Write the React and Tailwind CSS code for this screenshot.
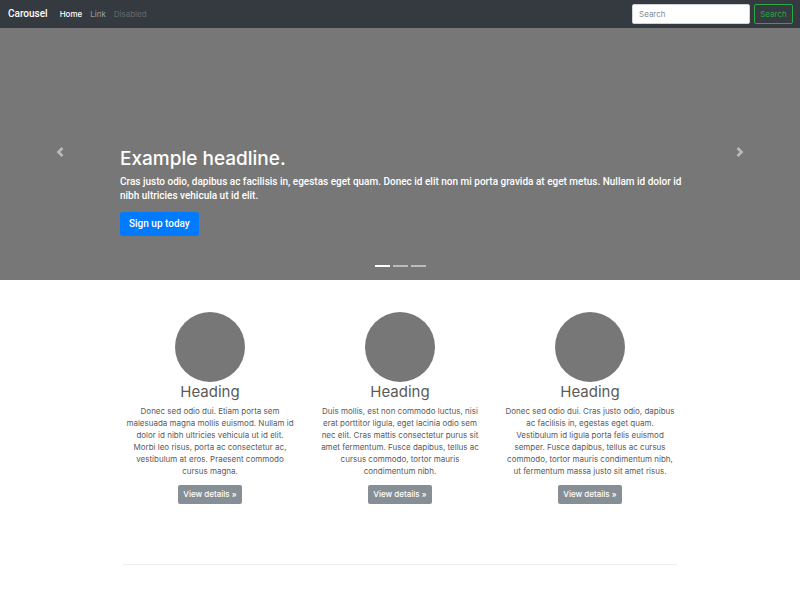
const columns = [
  {
    id: 'first',
    lines: [
      'Donec sed odio dui. Etiam porta sem',
      'malesuada magna mollis euismod. Nullam id',
      'dolor id nibh ultricies vehicula ut id elit.',
      'Morbi leo risus, porta ac consectetur ac,',
      'vestibulum at eros. Praesent commodo',
      'cursus magna.',
    ],
  },
  {
    id: 'second',
    lines: [
      'Duis mollis, est non commodo luctus, nisi',
      'erat porttitor ligula, eget lacinia odio sem',
      'nec elit. Cras mattis consectetur purus sit',
      'amet fermentum. Fusce dapibus, tellus ac',
      'cursus commodo, tortor mauris',
      'condimentum nibh.',
    ],
  },
  {
    id: 'third',
    lines: [
      'Donec sed odio dui. Cras justo odio, dapibus',
      'ac facilisis in, egestas eget quam.',
      'Vestibulum id ligula porta felis euismod',
      'semper. Fusce dapibus, tellus ac cursus',
      'commodo, tortor mauris condimentum nibh,',
      'ut fermentum massa justo sit amet risus.',
    ],
  },
];

function Navbar() {
  return (
    <nav className="flex h-7 items-center bg-[#343a40] px-2 text-[8px] leading-3">
      <a href="#" className="mr-3 font-[Roboto,sans-serif] text-[10px] font-medium text-white">Carousel</a>
      <div className="flex flex-1 gap-2">
        <a href="#" className="font-medium text-white">Home</a>
        <a href="#" className="text-white/50">Link</a>
        <a href="#" aria-disabled="true" className="text-white/25">Disabled</a>
      </div>
      <form className="-mr-px flex gap-1" onSubmit={(e) => e.preventDefault()}>
        <input
          type="text"
          aria-label="Search"
          placeholder="Search"
          className="h-5 w-[118px] rounded-xs border border-[#ced4da] bg-white px-[6px] text-[#495057] placeholder:text-[#868e96]"
        />
        <button type="submit" className="h-5 w-[39px] rounded-xs border border-[#28a745] text-[#28a745]">
          Search
        </button>
      </form>
    </nav>
  );
}

function Arrow({ label, d }) {
  return (
    <button type="button" aria-label={label} className="flex items-center justify-center pb-1 opacity-50">
      <svg viewBox="0 0 8 8" className="h-[10px] w-[10px]" fill="#fff" aria-hidden="true">
        <path d={d} />
      </svg>
    </button>
  );
}

function Hero() {
  return (
    <section className="grid min-h-[252px] grid-cols-[15%_1fr_15%] bg-[#777]">
      <Arrow label="Previous" d="M5.25 0l-4 4 4 4 1.5-1.5-2.5-2.5 2.5-2.5-1.5-1.5z" />
      <div className="flex flex-col justify-end pb-[13px] text-white">
        <h1 className="mb-1 text-[19px] leading-6 font-medium">Example headline.</h1>
        <p className="-mr-2 mb-[9px] font-[Roboto,sans-serif] text-[10px] leading-[14px] font-medium">
          Cras justo odio, dapibus ac facilisis in, egestas eget quam. Donec id elit non mi porta gravida at eget metus. Nullam id dolor id nibh ultricies vehicula ut id elit.
        </p>
        <a href="#" className="self-start rounded-[3px] bg-[#007bff] px-[9px] py-[5px] font-[Roboto,sans-serif] text-[10px] leading-[14px] font-medium">
          Sign up today
        </a>
        <div className="mt-[29px] flex justify-center gap-[3px]">
          <button type="button" aria-label="Slide 1" className="h-[2px] w-[15px] bg-white" />
          <button type="button" aria-label="Slide 2" className="h-[2px] w-[15px] bg-white/50" />
          <button type="button" aria-label="Slide 3" className="h-[2px] w-[15px] bg-white/50" />
        </div>
      </div>
      <Arrow label="Next" d="M2.75 0l-1.5 1.5 2.5 2.5-2.5 2.5 1.5 1.5 4-4-4-4z" />
    </section>
  );
}

export default function App() {
  return (
    <div className="min-h-screen bg-white font-[Inter,sans-serif] text-[#5a5a5a]">
      <Navbar />
      <Hero />
      <main className="mx-auto max-w-[570px] pt-8">
        <div className="grid grid-cols-3">
          {columns.map((column) => (
            <section key={column.id} className="flex flex-col items-center px-2 text-center text-[8px] leading-3">
              <div className="h-[70px] w-[70px] rounded-full bg-[#777]" />
              <h2 className="mb-[3px] text-[15px] leading-5">Heading</h2>
              <p className="mb-2 whitespace-pre-line">{column.lines.join('\n')}</p>
              <a href="#" className="rounded-xs bg-[#868e96] px-[5px] py-[3px] leading-[13px] font-medium text-white">
                View details »
              </a>
            </section>
          ))}
        </div>
        <hr className="mx-2 mt-[60px] border-[#eeeeee]" />
      </main>
    </div>
  );
}
